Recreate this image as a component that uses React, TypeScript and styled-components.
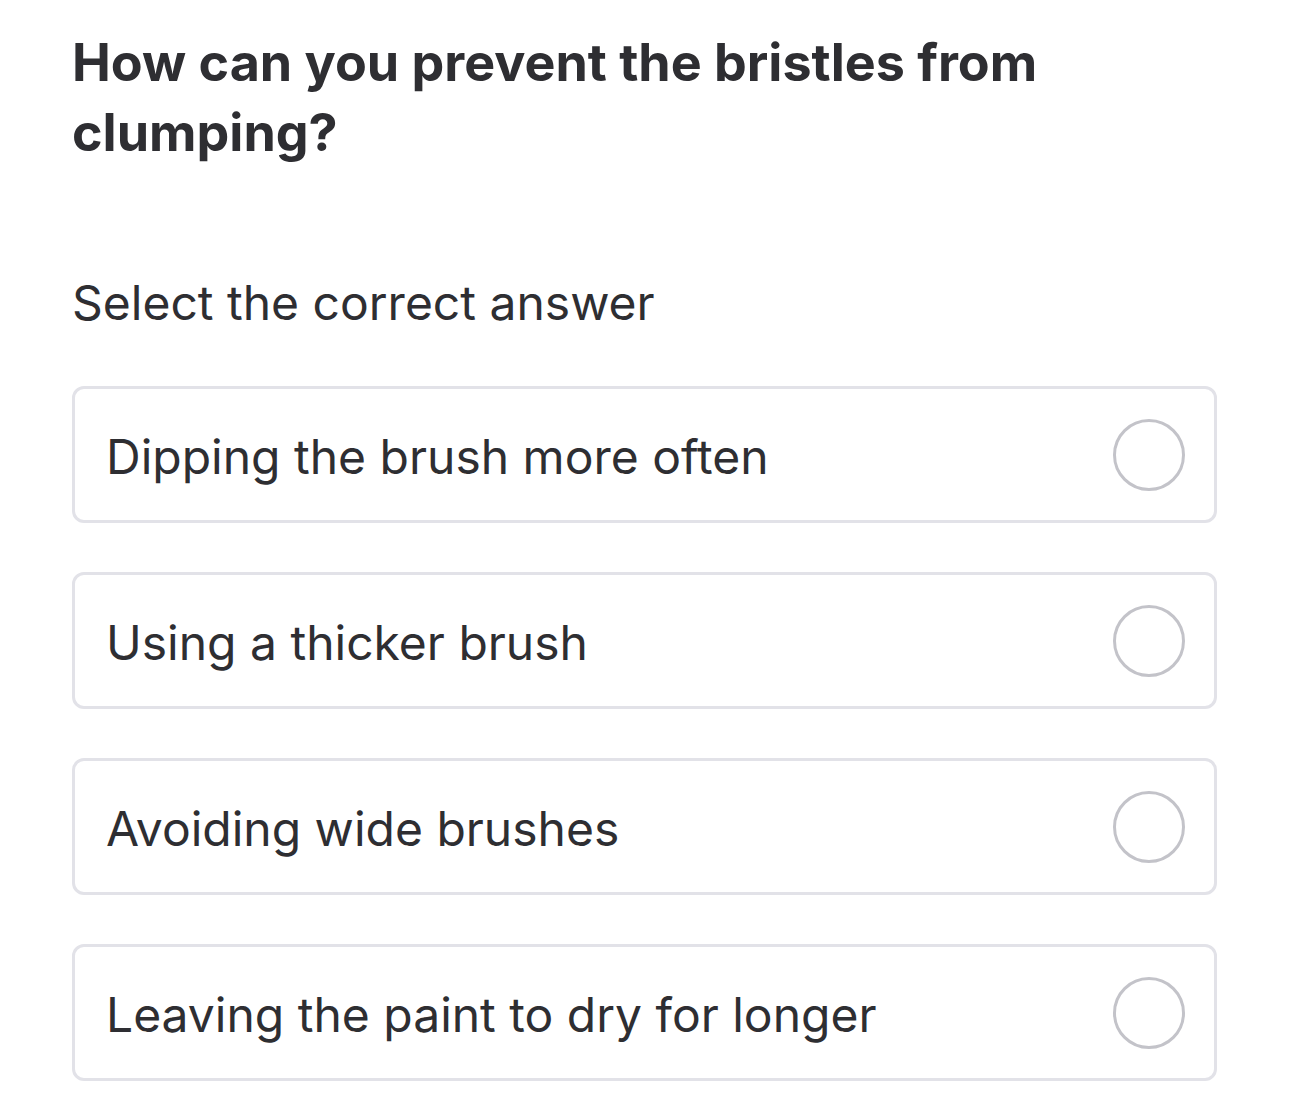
import React from "react";
import styled, { createGlobalStyle } from "styled-components";

const Global = createGlobalStyle`
  html, body { margin: 0; padding: 0; background: #ffffff; }
  body { font-family: Inter, "Noto Sans", sans-serif; color: #2e2e32; }
`;

const Page = styled.main`
  display: flex;
  flex-direction: column;
  padding: 28px 73px 0 72px;
`;

const Question = styled.h1`
  margin: 0;
  font-family: Inter, "Noto Sans", sans-serif;
  font-weight: 700;
  font-size: 52px;
  line-height: 70px;
  letter-spacing: 0;
  color: #2e2e32;
  max-width: 1010px;
`;

const Prompt = styled.p`
  margin: 105px 0 0 0;
  font-size: 48px;
  line-height: 60px;
  font-weight: 400;
  color: #2e2e32;
`;

const Options = styled.div`
  display: flex;
  flex-direction: column;
  gap: 49px;
  margin-top: 53px;
`;

const Option = styled.label`
  display: flex;
  align-items: center;
  justify-content: space-between;
  height: 137px;
  box-sizing: border-box;
  padding: 0 29px 0 31px;
  border: 3px solid #e2e2e8;
  border-radius: 12px;
  background: #ffffff;
`;

const OptionText = styled.span`
  padding-top: 3px;
  font-size: 48px;
  font-weight: 400;
  color: #2e2e32;
`;

const Radio = styled.span`
  width: 72px;
  height: 72px;
  box-sizing: border-box;
  border-radius: 50%;
  border: 3px solid #c3c3c9;
  flex-shrink: 0;
`;

const answers = [
  "Dipping the brush more often",
  "Using a thicker brush",
  "Avoiding wide brushes",
  "Leaving the paint to dry for longer",
];

export default function App() {
  return (
    <>
      <Global />
      <Page>
        <Question>How can you prevent the bristles from clumping?</Question>
        <Prompt>Select the correct answer</Prompt>
        <Options>
          {answers.map((a) => (
            <Option key={a}>
              <OptionText>{a}</OptionText>
              <Radio />
            </Option>
          ))}
        </Options>
      </Page>
    </>
  );
}
